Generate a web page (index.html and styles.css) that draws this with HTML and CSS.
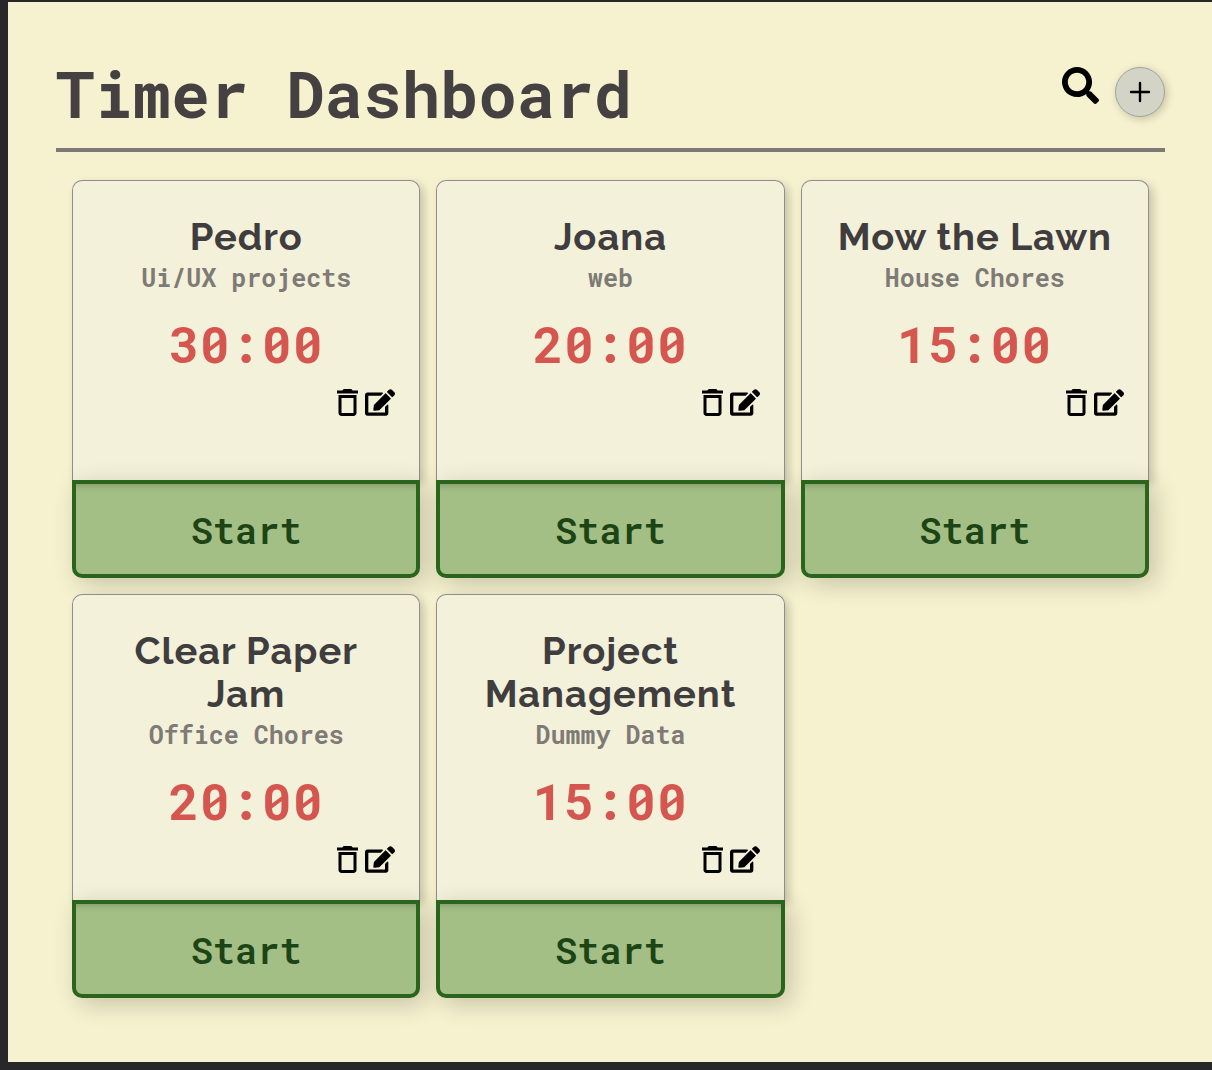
FILE: index.html
```html
<!DOCTYPE html>
<html lang="en">
<head>
<meta charset="utf-8">
<meta name="viewport" content="width=device-width, initial-scale=1">
<title>Timer Dashboard</title>
<link rel="stylesheet" href="styles.css">
</head>
<body>
<svg class="sprite" aria-hidden="true">
  <symbol id="trash" viewBox="5 3 14 18"><path d="M16 9v10H8V9h8m-1.500-6h-5l-1 1H5v2h14V4h-3.500l-1-1zM18 7H6v12c0 1.100.9 2 2 2h8c1.100 0 2-.9 2-2V7z"/></symbol>
  <symbol id="edit" viewBox="0 0 576 512"><path d="M402.600 83.200l90.200 90.200c3.800 3.800 3.800 10 0 13.800L274.400 405.600l-92.800 10.300c-12.400 1.400-22.900-9.100-21.500-21.500l10.300-92.800L388.800 83.200c3.800-3.800 10-3.800 13.800 0zm162-22.900l-48.800-48.800c-15.200-15.200-39.900-15.200-55.200 0l-35.400 35.400c-3.800 3.800-3.800 10 0 13.800l90.200 90.200c3.800 3.800 10 3.800 13.800 0l35.400-35.400c15.200-15.200 15.200-39.900 0-55.200zM384 346.200V448H64V128h229.800c3.200 0 6.200-1.300 8.500-3.500l40-40c7.600-7.600 2.100-20.500-8.500-20.500H48C21.500 64 0 85.500 0 112v352c0 26.500 21.500 48 48 48h352c26.500 0 48-21.500 48-48V306.200c0-10.700-12.900-16-20.500-8.500l-40 40c-2.200 2.300-3.500 5.300-3.500 8.500z"/></symbol>
</svg>
<main class="page">
  <header class="header">
    <h1 class="title">Timer Dashboard</h1>
    <div class="actions">
      <button class="icon-button" type="button" aria-label="Search">
        <svg class="icon-search" viewBox="0 0 512 512"><path d="M505 442.700L405.300 343c-4.500-4.500-10.600-7-17-7H372c27.600-35.300 44-79.700 44-128C416 93.100 322.900 0 208 0S0 93.100 0 208s93.100 208 208 208c48.300 0 92.700-16.400 128-44v16.300c0 6.400 2.500 12.500 7 17l99.700 99.700c9.400 9.400 24.600 9.400 33.900 0l28.300-28.300c9.400-9.400 9.400-24.600.1-34zM208 336c-70.700 0-128-57.200-128-128 0-70.700 57.200-128 128-128 70.700 0 128 57.200 128 128 0 70.700-57.200 128-128 128z"/></svg>
      </button>
      <button class="add" type="button" aria-label="Add timer">
        <svg class="icon-plus" viewBox="0 0 24 24"><path d="M12 3v18M3 12h18" stroke-width="2.400"/></svg>
      </button>
    </div>
  </header>
  <section class="timers">
    <article class="card">
      <div class="card-body">
        <h2 class="name">Pedro</h2>
        <p class="category">Ui/UX projects</p>
        <p class="time">30:00</p>
        <div class="tools">
          <button class="icon-button" type="button" aria-label="Delete"><svg class="icon-trash"><use href="#trash"/></svg></button>
          <button class="icon-button" type="button" aria-label="Edit"><svg class="icon-edit"><use href="#edit"/></svg></button>
        </div>
      </div>
      <button class="start" type="button">Start</button>
    </article>
    <article class="card">
      <div class="card-body">
        <h2 class="name">Joana</h2>
        <p class="category">web</p>
        <p class="time">20:00</p>
        <div class="tools">
          <button class="icon-button" type="button" aria-label="Delete"><svg class="icon-trash"><use href="#trash"/></svg></button>
          <button class="icon-button" type="button" aria-label="Edit"><svg class="icon-edit"><use href="#edit"/></svg></button>
        </div>
      </div>
      <button class="start" type="button">Start</button>
    </article>
    <article class="card">
      <div class="card-body">
        <h2 class="name">Mow the Lawn</h2>
        <p class="category">House Chores</p>
        <p class="time">15:00</p>
        <div class="tools">
          <button class="icon-button" type="button" aria-label="Delete"><svg class="icon-trash"><use href="#trash"/></svg></button>
          <button class="icon-button" type="button" aria-label="Edit"><svg class="icon-edit"><use href="#edit"/></svg></button>
        </div>
      </div>
      <button class="start" type="button">Start</button>
    </article>
    <article class="card">
      <div class="card-body">
        <h2 class="name">Clear Paper Jam</h2>
        <p class="category">Office Chores</p>
        <p class="time">20:00</p>
        <div class="tools">
          <button class="icon-button" type="button" aria-label="Delete"><svg class="icon-trash"><use href="#trash"/></svg></button>
          <button class="icon-button" type="button" aria-label="Edit"><svg class="icon-edit"><use href="#edit"/></svg></button>
        </div>
      </div>
      <button class="start" type="button">Start</button>
    </article>
    <article class="card">
      <div class="card-body">
        <h2 class="name">Project Management</h2>
        <p class="category">Dummy Data</p>
        <p class="time">15:00</p>
        <div class="tools">
          <button class="icon-button" type="button" aria-label="Delete"><svg class="icon-trash"><use href="#trash"/></svg></button>
          <button class="icon-button" type="button" aria-label="Edit"><svg class="icon-edit"><use href="#edit"/></svg></button>
        </div>
      </div>
      <button class="start" type="button">Start</button>
    </article>
  </section>
</main>
</body>
</html>
```
FILE: styles.css
```css
* {
  box-sizing: border-box;
}

html {
  background: #28282a;
}

body {
  margin: 2px 0 8px 8px;
  font-family: "Roboto Mono", "DejaVu Sans Mono", monospace;
}

h1,
h2,
p {
  margin: 0;
}

button {
  font: inherit;
  cursor: pointer;
}

.sprite {
  display: none;
}

.page {
  padding: 48px 47px 64px 48px;
  background: #f6f2cf;
}

.header {
  display: flex;
  justify-content: space-between;
  align-items: flex-start;
  padding-bottom: 12px;
  border-bottom: 4px solid #7d7975;
}

.title {
  font-size: 64px;
  line-height: 86px;
  font-weight: 700;
  color: #454142;
}

.actions {
  display: flex;
  align-items: flex-start;
  gap: 16px;
  padding-top: 17px;
}

.icon-button {
  display: block;
  padding: 0;
  border: 0;
  background: none;
  color: #000;
}

.icon-button svg {
  display: block;
  fill: currentColor;
}

.icon-search {
  width: 37px;
  height: 37px;
}

.add {
  display: grid;
  place-items: center;
  width: 50px;
  height: 50px;
  padding: 0;
  border: 1px solid #a3a3a0;
  border-radius: 50%;
  background: #d3d3c6;
  box-shadow: 2px 2px 8px rgba(0, 0, 0, 0.2);
}

.icon-plus {
  width: 24px;
  height: 24px;
  fill: none;
  stroke: #000;
  stroke-linecap: round;
}

.timers {
  display: grid;
  grid-template-columns: repeat(3, 1fr);
  gap: 16px;
  padding: 28px 16px 0;
}

.card {
  display: flex;
  flex-direction: column;
}

.card-body {
  flex: 1;
  min-height: 300px;
  padding: 34px 24px 27px;
  border: 1px solid #8e8e8e;
  border-bottom: 0;
  border-radius: 10px 10px 0 0;
  background: #f4f1da;
  box-shadow: 4px 4px 10px rgba(0, 0, 0, 0.2);
  text-align: center;
}

.name {
  font-family: Raleway, Lato, sans-serif;
  font-size: 38px;
  line-height: 43px;
  font-weight: 700;
  letter-spacing: 1px;
  color: #403d3f;
}

.category {
  margin-top: 3px;
  font-size: 25px;
  line-height: 34px;
  font-weight: 700;
  color: #7e7a76;
}

.time {
  margin-top: 17px;
  font-size: 50px;
  line-height: 64px;
  font-weight: 700;
  letter-spacing: 1px;
  color: #d5554f;
}

.tools {
  display: flex;
  justify-content: flex-end;
  gap: 7px;
  margin-top: 13px;
}

.icon-trash {
  width: 21px;
  height: 27px;
}

.icon-edit {
  width: 30px;
  height: 27px;
}

.start {
  height: 98px;
  border: 4px solid #2a651b;
  border-radius: 0 0 10px 10px;
  background: #a4bf86;
  box-shadow: 6px 6px 24px rgba(0, 0, 0, 0.2), inset 0 8px 6px -6px rgba(0, 0, 0, 0.2);
  font-size: 37px;
  font-weight: 600;
  color: #1c4415;
}
```
